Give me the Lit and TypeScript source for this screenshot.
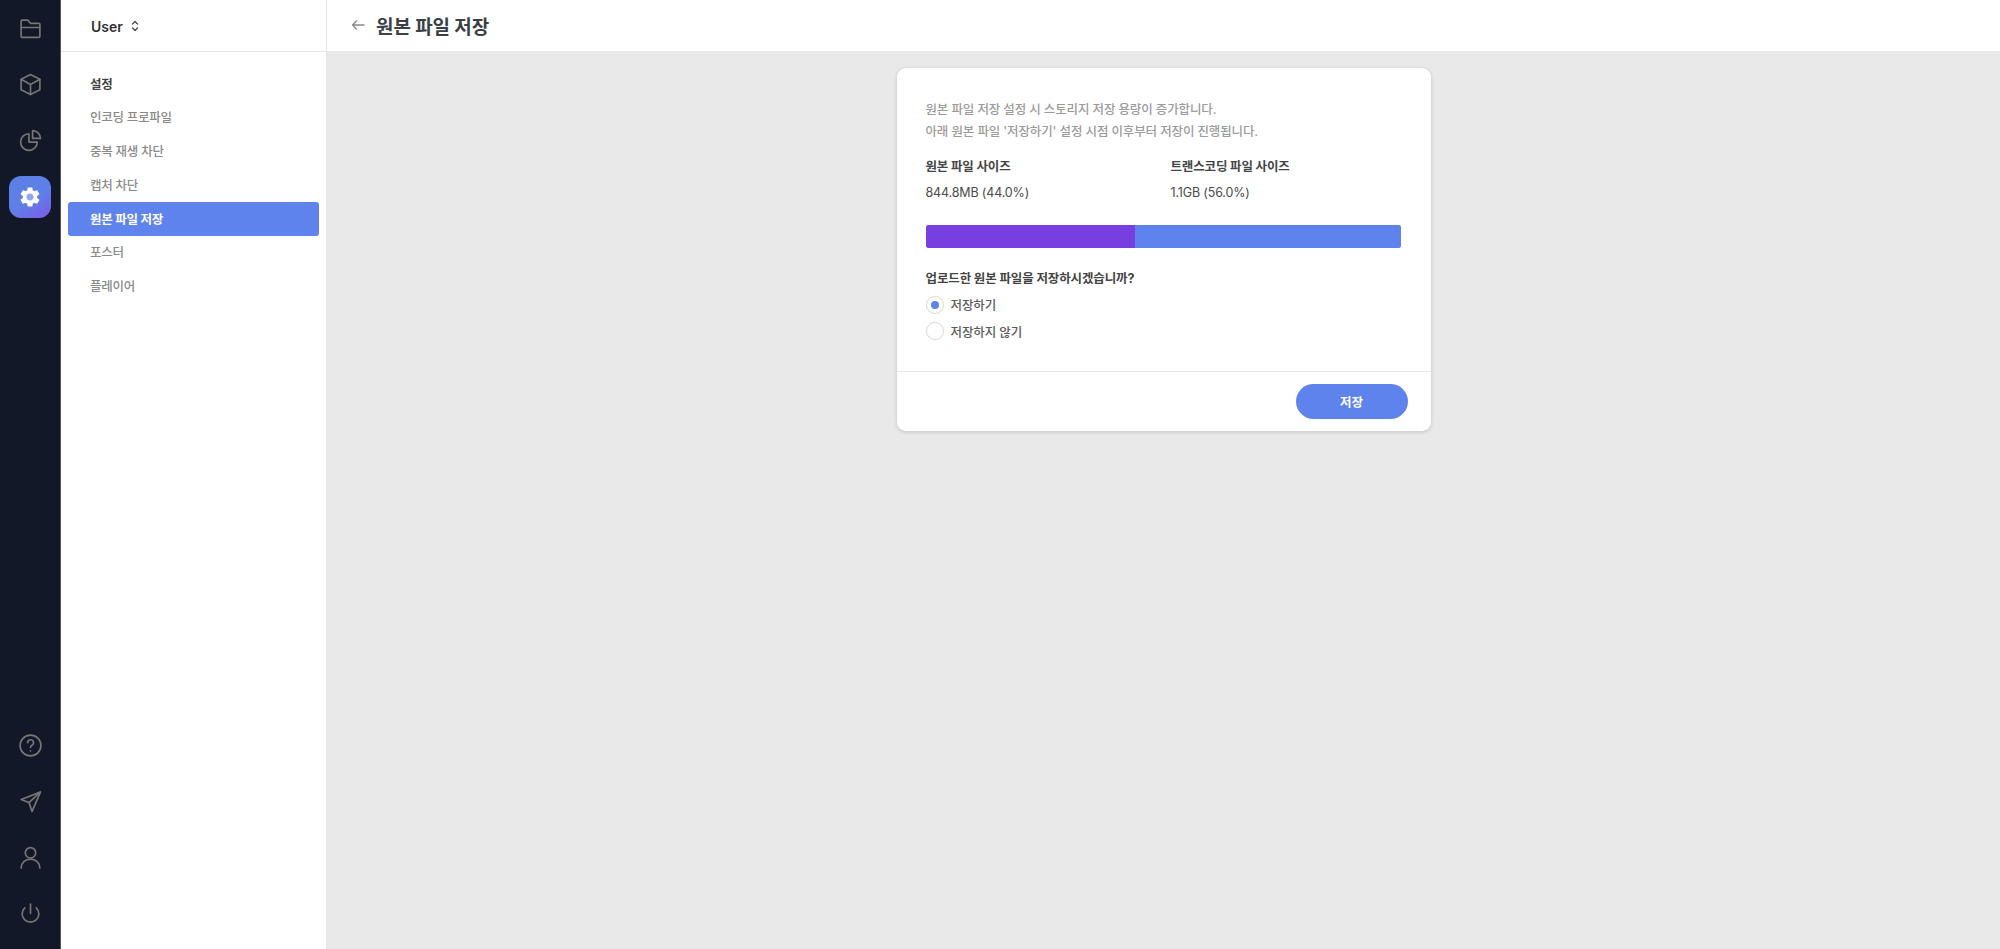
import { LitElement, html, css, svg } from "lit";
import { customElement } from "lit/decorators.js";

const ic = (inner: unknown) => html`<svg class="ic" viewBox="0 0 24 24" fill="none" stroke="currentColor" stroke-width="1.6" stroke-linecap="round" stroke-linejoin="round">${inner}</svg>`;

const topIcons = [
  svg`<path d="M3 19.500V5a1 1 0 0 1 1-1h5.500l2.500 3h8a1 1 0 0 1 1 1v11.500a1 1 0 0 1-1 1H4a1 1 0 0 1-1-1Z"/><path d="M3 11h18"/>`,
  svg`<path d="M12 2.500 21 7v10l-9 4.500L3 17V7Z"/><path d="M3 7l9 5 9-5M12 12v9.500"/>`,
  svg`<path d="M10.500 5.500a8 8 0 1 0 8 8h-8Z"/><path d="M14 2.500a7.500 7.500 0 0 1 7.500 7.500H14Z"/>`,
];
const bottomIcons = [
  svg`<circle cx="12" cy="12" r="10"/><path d="M9.300 9.300a2.800 2.800 0 1 1 4.200 2.400c-.9.5-1.500 1.100-1.500 2.100"/><path d="M12 17.200v.1"/>`,
  svg`<path d="M21.500 3 3 10l7.500 3 3 8.500Z"/><path d="M21.500 3 10.500 13"/>`,
  svg`<circle cx="12" cy="7.500" r="5"/><path d="M3 22c0-5 4-8.500 9-8.500s9 3.500 9 8.500"/>`,
  svg`<path d="M12 3v9"/><path d="M6.500 6.500a8 8 0 1 0 11 0"/>`,
];

@customElement("app-root")
export class AppRoot extends LitElement {
  static styles = css`
    :host { display: block; height: 949px; overflow: hidden; font-family: Inter, "Noto Sans CJK KR", sans-serif; background: #e9e9e9; color: #333; }
    * { box-sizing: border-box; }
    .page { display: flex; height: 949px; }
    .rail { width: 61px; flex: none; background: #131829; border-right: 1px solid #555; display: flex; flex-direction: column; justify-content: space-between; align-items: center; color: #767676; padding: 0 0 8px; }
    .rail-group { display: flex; flex-direction: column; align-items: center; }
    .rail-btn { width: 42px; height: 56px; display: flex; align-items: center; justify-content: center; }
    .ic { width: 25px; height: 25px; display: block; }
    .gear-wrap { height: 42px; margin-top: 8px; width: 42px; border-radius: 12px; background: linear-gradient(150deg, #5a80e4 0%, #5f7fe8 55%, #7c5ae8 100%); display: flex; align-items: center; justify-content: center; }
    .gear { width: 24px; height: 24px; display: block; }
    .side { width: 266px; flex: none; background: #fff; border-right: 1px solid #e6e6e6; }
    .side-head { height: 52px; border-bottom: 1px solid #e8e8e8; display: flex; align-items: center; gap: 7px; padding: 1px 0 0 30px; font-size: 14px; font-weight: 600; color: #333; }
    .updown { width: 10px; height: 14px; display: block; }
    .nav { display: flex; flex-direction: column; padding: 15px 7px 0 7px; }
    .nav-item { height: 33.800px; padding: 0 0 2px 22px; display: flex; align-items: center; font-size: 12.500px; font-weight: 500; color: #8a8a8a; border-radius: 3px; letter-spacing: -0.25px; }
    .nav-title { color: #444; font-weight: 700; padding-bottom: 0; }
    .nav-active { background: #5f83ec; color: #fff; font-weight: 700; }
    .main { flex: 1; min-width: 0; display: flex; flex-direction: column; }
    .top { height: 52px; flex: none; background: #fff; border-bottom: 1px solid #e8e8e8; display: flex; align-items: center; gap: 11px; padding: 0 0 1px 24px; }
    .back { width: 14px; height: 14px; display: block; color: #888; }
    h1 { margin: 0; font-size: 19px; font-weight: 700; color: #3c3f46; letter-spacing: -0.1px; }
    .content { flex: 1; display: flex; justify-content: center; padding-top: 16px; align-items: flex-start; }
    .card { width: 534px; background: #fff; border-radius: 9px; box-shadow: 0 1px 4px rgba(0,0,0,.16); }
    .body { padding: 31px 30px 0 29px; height: 304px; border-bottom: 1px solid #e8e8e8; }
    .desc { font-size: 12.500px; line-height: 21.500px; color: #9b9b9b; font-weight: 500; letter-spacing: -0.13px; }
    .stats { display: grid; grid-template-columns: 245px 1fr; margin-top: 15px; }
    .label { font-size: 12.500px; line-height: 20px; font-weight: 700; color: #444; letter-spacing: -0.15px; }
    .value { font-size: 12.500px; line-height: 20px; margin-top: 6px; color: #4a4a4a; letter-spacing: -0.15px; }
    .bar { display: flex; height: 23px; border-radius: 3px; overflow: hidden; margin-top: 22px; background: #5f83ec; }
    .bar-a { background: #773fe0; }
    .bar-b { flex: 1; background: #5f83ec; }
    .q { font-size: 12.500px; line-height: 20px; font-weight: 700; color: #444; margin-top: 20.500px; letter-spacing: -0.12px; }
    .radio { display: flex; align-items: center; gap: 7px; height: 26.500px; font-size: 12.500px; color: #5a5a5a; font-weight: 500; letter-spacing: -0.1px; }
    .radios { margin-top: 3px; }
    .dot { width: 18px; height: 18px; border-radius: 50%; border: 1px solid #dcdcdc; display: flex; align-items: center; justify-content: center; flex: none; box-shadow: 0 0 1px rgba(0,0,0,.1); }
    .dot-in { width: 8px; height: 8px; border-radius: 50%; background: #5f83ec; }
    .foot { height: 59px; display: flex; justify-content: flex-end; align-items: flex-start; padding: 12px 23px 0 0; }
    .save { width: 112px; height: 35px; border-radius: 18px; background: #5f83ec; color: #fff; display: flex; align-items: center; justify-content: center; font-size: 12.500px; font-weight: 700; padding-bottom: 1px; }
  `;

  render() {
    const items = ["인코딩 프로파일", "중복 재생 차단", "캡처 차단", "원본 파일 저장", "포스터", "플레이어"];
    return html`
      <div class="page">
        <div class="rail">
          <div class="rail-group rail-top">
            ${topIcons.map((i) => html`<div class="rail-btn">${ic(i)}</div>`)}
            <div class="gear-wrap">
              <svg class="gear" viewBox="0 0 24 24">
                <circle cx="12" cy="12" r="4" fill="#8fa8ee"/>
                <path fill="#fff" d="M19.140 12.940c.04-.3.06-.61.06-.94 0-.32-.02-.64-.07-.94l2.030-1.580c.18-.14.23-.41.12-.61l-1.920-3.320c-.12-.22-.37-.29-.59-.22l-2.390.96c-.5-.38-1.030-.7-1.620-.94l-.36-2.540c-.04-.24-.24-.41-.48-.41h-3.840c-.24 0-.43.17-.47.41l-.36 2.540c-.59.24-1.130.57-1.620.94l-2.390-.96c-.22-.08-.47 0-.59.22L2.740 8.870c-.12.21-.08.47.12.61l2.030 1.580c-.05.3-.09.63-.09.94s.02.64.07.94l-2.030 1.580c-.18.14-.23.41-.12.61l1.920 3.320c.12.22.37.29.59.22l2.390-.96c.5.38 1.030.7 1.620.94l.36 2.540c.05.24.24.41.48.41h3.840c.24 0 .44-.17.47-.41l.36-2.540c.59-.24 1.130-.56 1.620-.94l2.390.96c.22.08.47 0 .59-.22l1.920-3.320c.12-.22.07-.47-.12-.61l-2.010-1.580zM12 15.600c-1.980 0-3.600-1.620-3.600-3.600s1.620-3.600 3.600-3.600 3.600 1.620 3.600 3.600-1.620 3.600-3.600 3.600z"/>
              </svg>
            </div>
          </div>
          <div class="rail-group">
            ${bottomIcons.map((i) => html`<div class="rail-btn">${ic(i)}</div>`)}
          </div>
        </div>
        <div class="side">
          <div class="side-head">
            <span>User</span>
            <svg class="updown" viewBox="0 0 10 14" fill="none" stroke="#444" stroke-width="1.300" stroke-linecap="round" stroke-linejoin="round"><path d="M2.500 5 5 2.500 7.500 5M2.500 9 5 11.500 7.500 9"/></svg>
          </div>
          <div class="nav">
            <div class="nav-item nav-title">설정</div>
            ${items.map((t) => html`<div class="nav-item ${t === "원본 파일 저장" ? "nav-active" : ""}">${t}</div>`)}
          </div>
        </div>
        <div class="main">
          <div class="top">
            <svg class="back" viewBox="0 0 14 14" fill="none" stroke="currentColor" stroke-width="1.300" stroke-linecap="round" stroke-linejoin="round"><path d="M13 7H1.500M5.500 3 1.500 7l4 4"/></svg>
            <h1>원본 파일 저장</h1>
          </div>
          <div class="content">
            <div class="card">
              <div class="body">
                <div class="desc">원본 파일 저장 설정 시 스토리지 저장 용량이 증가합니다.<br />아래 원본 파일 '저장하기' 설정 시점 이후부터 저장이 진행됩니다.</div>
                <div class="stats">
                  <div><div class="label">원본 파일 사이즈</div><div class="value">844.8MB (44.0%)</div></div>
                  <div><div class="label">트랜스코딩 파일 사이즈</div><div class="value">1.1GB (56.0%)</div></div>
                </div>
                <div class="bar"><div class="bar-a" style="width:44%"></div><div class="bar-b"></div></div>
                <div class="q">업로드한 원본 파일을 저장하시겠습니까?</div>
                <div class="radios">
                  <div class="radio"><span class="dot"><span class="dot-in"></span></span>저장하기</div>
                  <div class="radio"><span class="dot"></span>저장하지 않기</div>
                </div>
              </div>
              <div class="foot"><div class="save">저장</div></div>
            </div>
          </div>
        </div>
      </div>
    `;
  }
}
